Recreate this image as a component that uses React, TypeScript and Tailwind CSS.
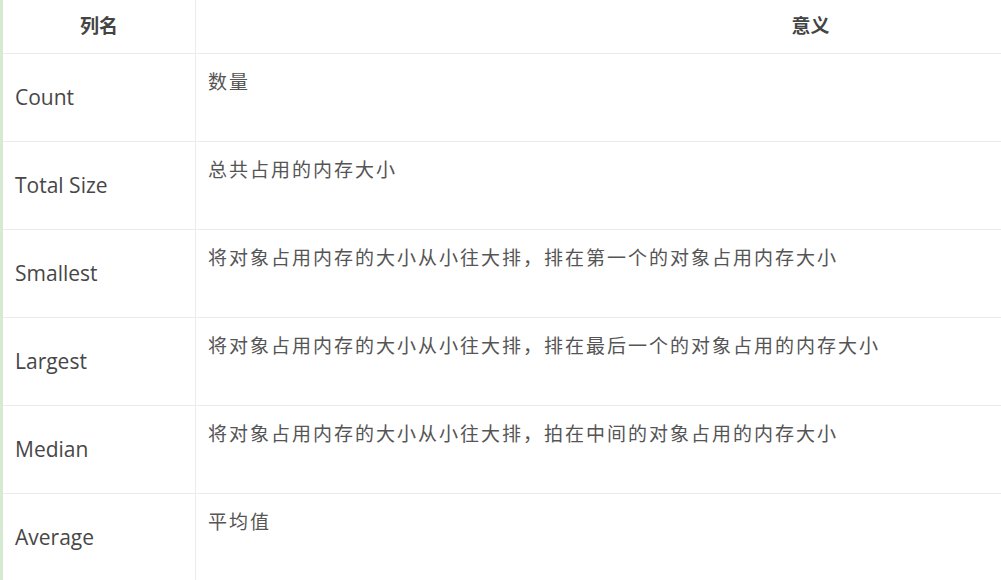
const rows = [
  { name: 'Count', meaning: '数量' },
  { name: 'Total Size', meaning: '总共占用的内存大小' },
  { name: 'Smallest', meaning: '将对象占用内存的大小从小往大排，排在第一个的对象占用内存大小' },
  { name: 'Largest', meaning: '将对象占用内存的大小从小往大排，排在最后一个的对象占用的内存大小' },
  { name: 'Median', meaning: '将对象占用内存的大小从小往大排，拍在中间的对象占用的内存大小' },
  { name: 'Average', meaning: '平均值' },
]

export default function App() {
  return (
    <div className="w-[1001px] h-[580px] overflow-hidden bg-white border-l-[3px] border-[#d6ead1] font-['Open_Sans','Noto_Sans_CJK_SC',sans-serif] text-[#474747]">
      <div className="w-[1422px]">
        <div className="flex h-[54px] border-b border-[#ececec] font-bold text-[19px] text-[#444]">
          <div className="w-[193px] shrink-0 border-r border-[#ececec] flex items-center justify-center">列名</div>
          <div className="flex-1 flex items-center justify-center">意义</div>
        </div>
        {rows.map((row, i) => (
          <div key={i} className="flex h-[88px] border-b border-[#ececec]">
            <div className="w-[193px] shrink-0 border-r border-[#ececec] flex items-center px-3 pt-[1px] text-[21px]">
              {row.name}
            </div>
            <div className="flex-1 px-3 pt-[16px] text-[19px] leading-[24px] tracking-[2px] text-[#555]">
              {row.meaning}
            </div>
          </div>
        ))}
      </div>
    </div>
  )
}
